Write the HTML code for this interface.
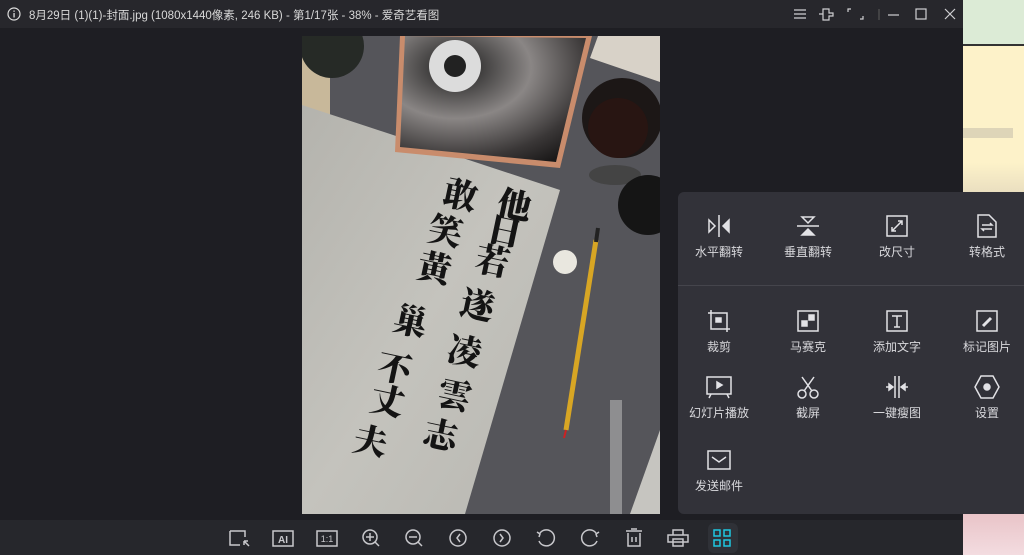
<!DOCTYPE html>
<html><head><meta charset="utf-8"><style>
*{margin:0;padding:0;box-sizing:border-box}
body{width:1024px;height:555px;overflow:hidden;position:relative;background:#1e1e23;font-family:"Liberation Sans","Noto Sans CJK SC",sans-serif}
.abs{position:absolute}
.lbl{position:absolute;width:100px;text-align:center;color:#d8d8dc;font-size:12px;line-height:14px}
</style></head><body>
<div class="abs" style="left:963px;top:0;width:61px;height:44px;background:#dcebd6"></div>
<div class="abs" style="left:963px;top:44px;width:61px;height:2px;background:#333"></div>
<div class="abs" style="left:963px;top:46px;width:61px;height:146px;background:linear-gradient(#fdf2c9 80%,#eadfc0)"></div>
<div class="abs" style="left:963px;top:128px;width:50px;height:10px;background:#c9c2ad;opacity:.6"></div>
<div class="abs" style="left:963px;top:514px;width:61px;height:41px;background:linear-gradient(#e9c4c8,#f3dce0)"></div>
<div class="abs" style="left:0;top:0;width:963px;height:28px;background:#27272c"></div>
<svg class="abs" style="left:7px;top:7px" width="14" height="14"><circle cx="7" cy="7" r="6" fill="none" stroke="#ddd" stroke-width="1.2"/><rect x="6.4" y="6" width="1.3" height="4.5" fill="#ddd"/><rect x="6.4" y="3.5" width="1.3" height="1.3" fill="#ddd"/></svg>
<div class="abs" style="left:29px;top:7px;color:#d8d8d8;font-size:11.5px;white-space:nowrap">8月29日 (1)(1)-封面.jpg (1080x1440像素, 246 KB) - 第1/17张 - 38% - 爱奇艺看图</div>
<svg class="abs" style="left:785px;top:0" width="178" height="28" fill="none" stroke="#cfcfd2" stroke-width="1.2">
<path d="M9 10h12M9 14h12M9 18h12"/>
<path d="M38 9h6v4h4v3h-4v4h-6zM38 14h-4"/>
<path d="M66 9h-3v3M75 19h3v-3"/>
<path d="M94 9v11" stroke="#555"/>
<path d="M103 15h11"/>
<rect x="131" y="9" width="10" height="10"/>
<path d="M160 9l10 10M170 9l-10 10"/>
</svg>
<svg class="abs" style="left:302px;top:36px" width="358" height="478" viewBox="302 36 358 478">
<defs><linearGradient id="pp" x1="0" y1="0" x2="1" y2="1"><stop offset="0" stop-color="#b4b3ad"/><stop offset=".5" stop-color="#c4c3bd"/><stop offset="1" stop-color="#b8b7b1"/></linearGradient>
<radialGradient id="sc" cx=".3" cy=".25" r=".9"><stop offset="0" stop-color="#1a1a1a"/><stop offset=".45" stop-color="#8a8685"/><stop offset=".8" stop-color="#3a3737"/><stop offset="1" stop-color="#1a1818"/></radialGradient></defs>
<rect x="302" y="36" width="358" height="478" fill="#55555a"/>
<rect x="302" y="36" width="28" height="80" fill="#c8b89a"/>
<circle cx="332" cy="46" r="32" fill="#262a26"/>
<polygon points="598,36 660,36 660,82 590,58" fill="#d8d2c8"/>
<polygon points="302,105 560,190 465,514 302,514" fill="url(#pp)"/>
<polygon points="400,36 592,36 560,168 395,152" rx="10" fill="#c98c6c"/>
<polygon points="405,36 586,38 556,162 400,147" fill="url(#sc)"/>
<circle cx="455" cy="66" r="26" fill="#dcdcdc"/><circle cx="455" cy="66" r="11" fill="#222"/>
<circle cx="622" cy="118" r="40" fill="#1c1716"/><circle cx="618" cy="128" r="30" fill="#281512"/>
<ellipse cx="615" cy="175" rx="26" ry="10" fill="#444"/>
<circle cx="648" cy="205" r="30" fill="#151515"/>
<circle cx="565" cy="262" r="12" fill="#e9e7df"/>
<path d="M596 240L566 430" stroke="#d8a624" stroke-width="5"/>
<path d="M598 228L596 242" stroke="#222" stroke-width="4"/>
<path d="M566 430l-2 8" stroke="#c22" stroke-width="2"/>
<rect x="610" y="400" width="12" height="114" fill="#8e8e90"/>
<polygon points="660,430 660,514 630,514" fill="#c6c5c0"/>
<g font-family="'Noto Serif CJK SC',serif" font-size="34" font-weight="900" fill="#141414" text-anchor="middle">
<text transform="translate(512,217) rotate(12)">他</text>
<text transform="translate(502,243) rotate(12)">日</text>
<text transform="translate(490,273) rotate(12)">若</text>
<text transform="translate(475,317) rotate(12)">遂</text>
<text transform="translate(462,363) rotate(12)">凌</text>
<text transform="translate(452,407) rotate(12)">雲</text>
<text transform="translate(438,447) rotate(12)">志</text>
<text transform="translate(458,207) rotate(12)">敢</text>
<text transform="translate(443,243) rotate(12)">笑</text>
<text transform="translate(432,280) rotate(12)">黃</text>
<text transform="translate(408,333) rotate(12)">巢</text>
<text transform="translate(392,380) rotate(12)">不</text>
<text transform="translate(385,413) rotate(12)">丈</text>
<text transform="translate(368,453) rotate(12)">夫</text>
</g>
</svg>
<div class="abs" style="left:0;top:520px;width:963px;height:35px;background:#26272c"></div>
<div class="abs" style="left:708px;top:523px;width:30px;height:30px;border-radius:6px;background:#2f3137"></div>
<svg class="abs" style="left:0;top:520px" width="963" height="35" fill="none" stroke="#c8c8cc" stroke-width="1.5">
<path d="M230 11h15v6M230 11v14h10M244 21l5 5M244 21h4M244 21v4"/>
<rect x="273" y="11" width="20" height="15"/><text x="283" y="23" font-size="10" font-weight="bold" fill="#c8c8cc" stroke="none" text-anchor="middle" font-family="Liberation Sans">AI</text>
<rect x="317" y="11" width="20" height="15"/><text x="327" y="22" font-size="9" fill="#c8c8cc" stroke="none" text-anchor="middle" font-family="Liberation Sans">1:1</text>
<circle cx="370" cy="17" r="7"/><path d="M375 22l4 4M370 13v8M366 17h8"/>
<circle cx="413" cy="17" r="7"/><path d="M418 22l4 4M409 17h8"/>
<circle cx="458" cy="18" r="8"/><path d="M460 14l-3 4 3 4"/>
<circle cx="502" cy="18" r="8"/><path d="M500 14l3 4-3 4"/>
<path d="M540 13a8 8 0 1 1 -1 8M537 12l3 2-1 3"/>
<path d="M596 13a8 8 0 1 0 1 8M599 12l-3 2 1 3"/>
<path d="M626 11h16M631 9h6M628 13v13h12v-13M632 17v5M636 17v5"/>
<path d="M673 15v-5h10v5M668 15h20v7h-20zM673 19h10v7h-10z"/>
<g stroke="#1ec7e0"><rect x="714" y="10" width="6" height="6"/><rect x="724" y="10" width="6" height="6"/><rect x="714" y="20" width="6" height="6"/><rect x="724" y="20" width="6" height="6"/></g>
</svg>
<div class="abs" style="left:678px;top:192px;width:346px;height:322px;background:#323239;border-radius:6px 0 0 6px"></div>
<div class="abs" style="left:678px;top:285px;width:346px;height:1px;background:#45454c"></div>
<svg class="abs" style="left:678px;top:192px" width="346" height="322" fill="none" stroke="#e2e2e6" stroke-width="1.5">
<g transform="translate(41,34)"><path d="M-10 -6l6 6-6 6z"/><path d="M0 -11v22"/><path d="M10 -6l-6 6 6 6z" fill="#e2e2e6"/></g>
<g transform="translate(130,34)"><path d="M-6 -9h12l-6 6z"/><path d="M-11 0h22"/><path d="M-6 9h12l-6 -6z" fill="#e2e2e6"/></g>
<g transform="translate(219,34)"><rect x="-10" y="-10" width="20" height="20"/><path d="M-5 5l10-10M1-5h4v4M-5 1v4h4"/></g>
<g transform="translate(309,34)"><path d="M-9 -11h11l7 7v15h-18z"/><path d="M-5 -1h10l-2-2M5 3h-10l2 2"/></g>
<g transform="translate(41,129)"><path d="M-11 -8h19v19M-8 -11v19h19"/><rect x="-3" y="-3" width="5" height="4" fill="#e2e2e6"/></g>
<g transform="translate(130,129)"><rect x="-10" y="-10" width="20" height="20"/><rect x="-6" y="0" width="5" height="5" fill="#e2e2e6"/><rect x="1" y="-6" width="5" height="5" fill="#e2e2e6"/></g>
<g transform="translate(219,129)"><rect x="-10" y="-10" width="20" height="20"/><path d="M-5 -5h10M0 -5v11M-3 6h6"/></g>
<g transform="translate(309,129)"><rect x="-10" y="-10" width="20" height="20"/><path d="M-4 5l8-8" stroke-width="3"/></g>
<g transform="translate(41,195)"><rect x="-12" y="-10" width="24" height="17"/><path d="M-2 -5l5 3-5 3z" fill="#e2e2e6"/><path d="M-8 7l-2 4M8 7l2 4"/></g>
<g transform="translate(130,195)"><circle cx="-6" cy="7" r="4"/><circle cx="6" cy="7" r="4"/><path d="M-4 4l10-14M4 4l-10-14"/></g>
<g transform="translate(219,195)"><path d="M-2 -11v22M2 -11v22"/><path d="M-11 0h5M11 0h-5"/><path d="M-8 -3l4 3-4 3zM8 -3l-4 3 4 3z" fill="#e2e2e6"/></g>
<g transform="translate(309,195)"><path d="M-6 -11h12l6 11-6 11h-12l-6-11z"/><circle r="3" fill="#e2e2e6"/></g>
<g transform="translate(41,268)"><rect x="-11" y="-9" width="22" height="18"/><path d="M-7 -3l7 5 7-5"/></g>
</svg>
<div class="lbl" style="left:669px;top:245px">水平翻转</div>
<div class="lbl" style="left:758px;top:245px">垂直翻转</div>
<div class="lbl" style="left:847px;top:245px">改尺寸</div>
<div class="lbl" style="left:937px;top:245px">转格式</div>
<div class="lbl" style="left:669px;top:340px">裁剪</div>
<div class="lbl" style="left:758px;top:340px">马赛克</div>
<div class="lbl" style="left:847px;top:340px">添加文字</div>
<div class="lbl" style="left:937px;top:340px">标记图片</div>
<div class="lbl" style="left:669px;top:406px">幻灯片播放</div>
<div class="lbl" style="left:758px;top:406px">截屏</div>
<div class="lbl" style="left:847px;top:406px">一键瘦图</div>
<div class="lbl" style="left:937px;top:406px">设置</div>
<div class="lbl" style="left:669px;top:479px">发送邮件</div>
</body></html>
